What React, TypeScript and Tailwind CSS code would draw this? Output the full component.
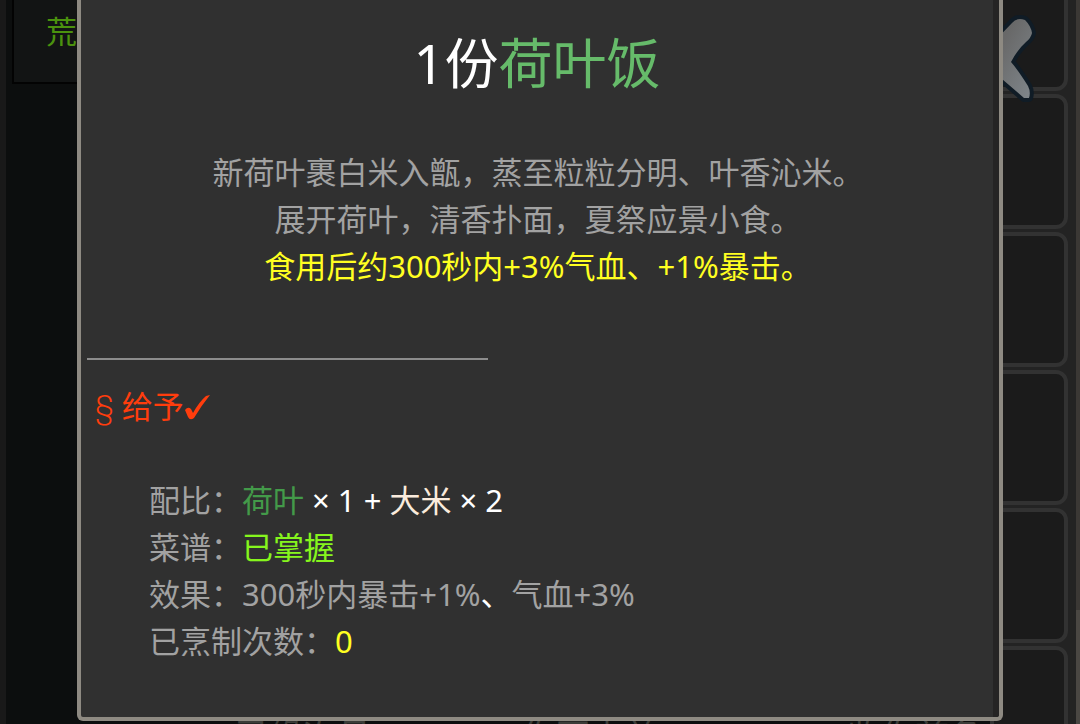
import React from "react";

const slots = [0, 1, 2, 3, 4, 5];

function Row({ label, children }: { label: string; children: React.ReactNode }) {
  return (
    <div className="flex">
      <dt className="text-[#a2a2a2]">{label}：</dt>
      <dd className="whitespace-pre">{children}</dd>
    </div>
  );
}

function Backdrop() {
  return (
    <div className="flex h-full justify-between bg-[#0c0e0e]">
      <div className="flex grow flex-col justify-between border-l-6 border-[#191919] pl-1.5">
        <div className="h-[84px] border-b-2 border-l-2 border-[#030303] bg-[#121414] pt-2 pl-8 text-[31px] leading-[47px] text-[#4b920e]">
          荒
        </div>
        <div className="-mb-[27px] grid grid-cols-3 pl-[138px] text-[34px] leading-8 whitespace-nowrap text-[#3b3c38]">
          <span className="pl-[85px]">已缘次月</span>
          <span className="pl-[92px]">你不去羊二</span>
          <span className="pl-[137px]">收你首条</span>
        </div>
      </div>
      <div className="flex w-[90px] bg-[#232323]">
        <div className="-mt-11 grow space-y-[3px]">
          {slots.map((n) => (
            <div key={n} className="h-[135px] rounded-r-[12px] border-4 border-[#323232] bg-[#1b1b1b]" />
          ))}
        </div>
        <div className="ml-2 flex w-1 flex-col bg-[#3b3835]">
          <div className="mt-auto h-[114px] bg-[#4a4743]" />
        </div>
      </div>
    </div>
  );
}

export default function App() {
  return (
    <main className="relative h-screen overflow-hidden bg-[#0c0e0e] font-['Noto_Sans','Noto_Sans_CJK_SC',sans-serif]">
      <Backdrop />
      <button aria-label="返回" className="absolute top-3 right-[42px] h-[92px] w-[50px]">
        <svg viewBox="0 0 50 92" className="h-full w-full overflow-visible">
          <defs>
            <linearGradient id="arrow" x1="0" y1="0" x2="1" y2="1">
              <stop offset="0.3" stopColor="#686868" />
              <stop offset="1" stopColor="#80878c" />
            </linearGradient>
          </defs>
          <path
            d="M0 36 L24 11 Q29 5 37 8 Q43 14 44 21 Q43 26 38 30 Q29 38 23 50 Q30 58 40 74 Q43 80 41 86 L36 86 L0 55 Z"
            fill="url(#arrow)"
            stroke="#101c26"
            strokeWidth="8"
            strokeLinejoin="round"
            paintOrder="stroke"
          />
        </svg>
      </button>
      <section
        role="dialog"
        aria-label="荷叶饭"
        className="absolute inset-x-[77px] top-0 bottom-[3px] overflow-hidden rounded-b-[6px] border-x-4 border-b-4 border-[#8e8a82] bg-[#303030] text-[31px] leading-[47px]"
      >
        <div className="h-full border-r-6 border-[#252424] pl-1.5">
          <h1 className="pt-[23px] pr-1.5 text-center text-[54px] leading-[80px] text-white">
            1份<span className="text-[#66bb6a]">荷叶饭</span>
          </h1>
          <div className="mt-[46px] pr-1 text-center text-[#a2a2a2]">
            <p>新荷叶裹白米入甑，蒸至粒粒分明、叶香沁米。</p>
            <p>展开荷叶，清香扑面，夏祭应景小食。</p>
            <p className="text-[#ffff21]">食用后约300秒内+3%气血、+1%暴击。</p>
          </div>
          <hr className="mt-[68px] w-[401px] border-t-2 border-[#8c8c8c]" />
          <button className="mt-[23px] ml-2 flex items-center text-[#ff3d0d]">
            <span className="mr-2 font-[Roboto,sans-serif] font-light">§</span>
            <span>给予</span>
            <svg viewBox="0 0 26 28" className="h-7 w-[26px]" aria-hidden="true">
              <path d="M1 17 Q4 13 7 16 L9 20 Q15 9 22 3 L26 2 Q17 13 10 25 Q6 28 4 24 Z" fill="currentColor" />
            </svg>
          </button>
          <dl className="mt-[47px] ml-[62px]">
            <Row label="配比">
              <span className="text-[#439a49]">荷叶</span>
              <span className="text-white"> × 1 + </span>
              <span className="text-[#faebdc]">大米</span>
              <span className="text-white"> × 2</span>
            </Row>
            <Row label="菜谱">
              <span className="text-[#86f51d]">已掌握</span>
            </Row>
            <Row label="效果">
              <span className="text-[#a2a2a2]">300秒内暴击+1%</span>
              <span className="text-white">、</span>
              <span className="text-[#a2a2a2]">气血+3%</span>
            </Row>
            <Row label="已烹制次数">
              <span className="text-[#ffff21]">0</span>
            </Row>
          </dl>
        </div>
      </section>
    </main>
  );
}
